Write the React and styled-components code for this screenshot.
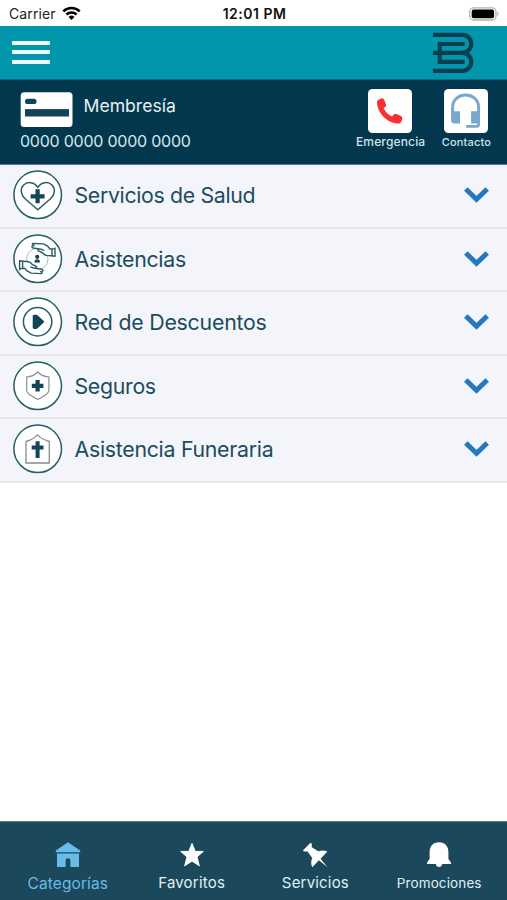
import React from 'react';
import styled, { createGlobalStyle } from 'styled-components';

const GlobalStyle = createGlobalStyle`
    * {
        box-sizing: border-box;
    }
    body {
        margin: 0;
        background: #fff;
        font-family: Inter, "Liberation Sans", sans-serif;
    }
`;

const Screen = styled.div`
    width: 100%;
    height: 100vh;
    display: flex;
    flex-direction: column;
    overflow: hidden;
`;

const StatusBar = styled.div`
    height: 25.5px;
    flex: none;
    display: grid;
    grid-template-columns: 1fr auto 1fr;
    align-items: center;
    padding: 1.5px 7px 0 9px;
    color: #222;
    font-size: 14px;
`;

const Carrier = styled.div`
    display: flex;
    align-items: center;
    gap: 6px;
    letter-spacing: 0.1px;
`;

const Time = styled.div`
    font-weight: 600;
    letter-spacing: 0.5px;
    color: #111;
`;

const Battery = styled.svg`
    justify-self: end;
`;

const Header = styled.header`
    height: 54px;
    flex: none;
    display: flex;
    justify-content: space-between;
    padding: 0 32px 0 12px;
    background: #0296ad;
    border-bottom: 1px solid #036f86;
`;

const MenuButton = styled.button`
    width: 38px;
    height: 38px;
    margin-top: 15px;
    padding: 0;
    border: 0;
    background: none;
    display: flex;
    flex-direction: column;
    gap: 5.6px;
`;

const MenuLine = styled.span`
    width: 100%;
    height: 4px;
    border-radius: 1px;
    background: #effcfe;
`;

const Logo = styled.svg`
    margin-top: 6.5px;
`;

const Membership = styled.section`
    height: 85.5px;
    flex: none;
    display: flex;
    justify-content: space-between;
    padding: 0 16px 0 20px;
    background: #02374d;
    border-bottom: 1px solid #547796;
`;

const CardTop = styled.div`
    display: flex;
    padding-top: 12.5px;
    height: 49px;
`;

const CardTitle = styled.div`
    margin: 2px 0 0 10.5px;
    font-size: 17.6px;
    line-height: 24px;
    letter-spacing: ${props => props.$spacing}px;
    color: #e6f1f5;
`;

const CardNumber = styled.div`
    font-size: 16px;
    line-height: 24px;
    letter-spacing: ${props => props.$spacing}px;
    color: #d5e7ee;
`;

const Actions = styled.div`
    display: flex;
    gap: 16.5px;
    padding-top: 9.5px;
`;

const Action = styled.div`
    display: flex;
    flex-direction: column;
    align-items: center;
    font-size: ${props => props.$size}px;
    font-weight: 500;
    letter-spacing: ${props => props.$spacing}px;
    line-height: 14px;
    color: #d0e2e9;
`;

const ActionIcon = styled.div`
    width: 43.5px;
    height: 43.5px;
    margin: 0 1px 2px 0;
    border-radius: 4.5px;
    background: #fff;
`;

const Row = styled.div`
    height: 63.5px;
    flex: none;
    display: flex;
    align-items: center;
    padding: 0 17.5px 1.5px 12.5px;
    background: #f3f5fa;
    border-bottom: 2.5px solid #e6e7e9;
`;

const RowLabel = styled.div`
    flex: 1;
    margin: 0 0 0 12px;
    font-size: 21.3px;
    line-height: 28px;
    letter-spacing: ${props => props.$spacing}px;
    white-space: nowrap;
    color: #1c4c60;
`;

const Spacer = styled.main`
    flex: 1;
`;

const TabBar = styled.nav`
    height: 79.5px;
    flex: none;
    display: grid;
    grid-template-columns: repeat(4, 123.8px);
    justify-content: center;
    background: #1b495b;
    border-top: 1px solid #58808c;
`;

const Tab = styled.div`
    display: flex;
    flex-direction: column;
    align-items: center;
    padding-top: 20px;
    color: ${props => props.$active ? '#67bce9' : '#e2eff3'};
`;

const TabLabel = styled.div`
    margin-top: ${props => props.$top}px;
    font-size: ${props => props.$size}px;
    line-height: 20px;
    letter-spacing: ${props => props.$spacing}px;
`;

const WifiIcon = () => (
    <svg width="19" height="15" viewBox="0 0 19 15" fill="none" stroke="#000" strokeWidth="2.5">
        <path d="M1.3 5.4 A11.8 11.8 0 0 1 17.7 5.4" />
        <path d="M4.4 8.5 A7.3 7.3 0 0 1 14.6 8.5" />
        <path d="M9.5 14 L6.6 11 A4.2 4.2 0 0 1 12.4 11 Z" fill="#000" stroke="none" />
    </svg>
);

const LogoIcon = () => (
    <Logo width="42" height="42" viewBox="0 0 42 42" fill="none" stroke="#073f50" strokeWidth="4.2">
        <path d="M0 2.8 H29.3 A9 9 0 0 1 29.3 20.8 H0" />
        <path d="M29.3 20.8 A9 9 0 0 1 29.3 38.8 H0" />
        <path d="M31.7 12 H6.8 V29.8 H31.7" />
    </Logo>
);

const CardIcon = () => (
    <svg width="53" height="36" viewBox="0 0 53 36">
        <rect x=".7" y=".2" width="51.8" height="34.8" rx="3.5" fill="#fff" />
        <rect x="5" y="6.8" width="11.5" height="5.2" rx="2.6" fill="#12435a" />
        <rect x="5" y="17.1" width="44" height="7.4" fill="#12435a" />
    </svg>
);

const PhoneIcon = () => (
    <svg width="43.5" height="43.5" viewBox="0 0 43.5 43.5">
        <path
            fill="#f92f36"
            d="M11 10.4 L13.5 9.3 Q15.6 8.9 16.3 11 L18 15.4 Q18.5 17 17 18.1 L15.6 19.3 C17.4 23 20.2 25.9 24.1 27.6 L25.9 25.5 Q26.9 24.4 28.5 25.1 L32.9 27 Q34.8 28 34.3 29.9 L33.2 32.9 Q32.5 34.6 30.5 34.6 C19.4 34.3 9.3 24.2 9 13 Q9.1 11.1 11 10.4 Z"
        />
    </svg>
);

const HeadsetIcon = () => (
    <svg width="43.5" height="43.5" viewBox="0 0 43.5 43.5" fill="none" stroke="#79a7d0">
        <path d="M8.6 24 V18.5 C8.6 1.8 34.6 1.8 34.6 18.5 V24" strokeWidth="3" />
        <path d="M7.1 22.3 H16 V34.6 H10.5 Q7.1 34.6 7.1 31 Z M27.1 22.3 H36 V31 Q36 34.6 32.5 34.6 H27.1 Z" fill="#79a7d0" stroke="none" />
        <path d="M34.5 31 V36 Q34.5 37.3 33 37.3 H22.2" strokeWidth="2.8" />
    </svg>
);

const Chevron = () => (
    <svg width="27" height="18" viewBox="0 0 27 18" fill="none" stroke="#2478bd" strokeWidth="5">
        <path d="M2.8 3 L13.5 13.3 L24.2 3" />
    </svg>
);

// every category drawing sits in the same 49px ring
const RingIcon = ({ children }) => (
    <svg width="50" height="50" viewBox="0 0 50 50" fill="none" stroke="#285f66">
        <circle cx="24.7" cy="24.8" r="23.8" fill="#fff" strokeWidth="1.5" />
        {children}
    </svg>
);

const Cross = ({ x, y, size }) => (
    <path d={`M${x - size} ${y} H${x + size} M${x} ${y - size} V${y + size}`} stroke="#124657" strokeWidth="4.2" />
);

const HealthIcon = () => (
    <RingIcon>
        <path d="M24.8 39.7 L12.1 28.8 C7.7 25 7 18.8 10.4 15.2 C14.5 11 21.2 12 24.8 17.3 C28.4 12 35.1 11 39.2 15.2 C42.6 18.8 41.9 25 37.5 28.8 Z" strokeWidth="1.5" />
        <Cross x={24.6} y={26.3} size={7} />
    </RingIcon>
);

const HandsIcon = () => (
    <RingIcon>
        <circle cx="24.3" cy="25" r="10.7" stroke="#a3b7bc" strokeWidth=".9" />
        <circle cx="24.2" cy="22.8" r="2.1" fill="#124657" stroke="none" />
        <path d="M21.4 28.6 Q21.5 25.3 24.2 25.3 Q26.9 25.3 27 28.6 Z" fill="#124657" stroke="none" />
        <path d="M42 13.5 V22.2 L33.6 21.4 Q31.2 21 29 18.5 L25.9 17.2 Q23.8 15.6 26.4 14.9 L31.2 16.4 M29.3 15.5 L20.2 14 Q17.6 12.9 19.8 11.8 L21.1 11.6 Q17.8 9.7 20.5 9.5 L30.4 9.9 L34.7 12.2 L37 15 L42 14.6 M39 15 V21.8" fill="#fff" strokeWidth="1.4" strokeLinejoin="round" />
        <path d="M6.6 36.4 V26.8 L15.2 27.8 Q17.5 28.2 19.5 30.7 L22.8 32 Q24.9 33.7 22.2 34.4 L17.5 33 M19.5 33.8 L28.6 35.2 Q31.2 36.4 29 37.5 L27.7 37.7 Q30.5 39.4 27.8 39.6 L18.2 39.1 L14 36.8 L11.6 34.3 L6.6 34.6 M9.6 27.2 V34.4" fill="#fff" strokeWidth="1.4" strokeLinejoin="round" />
    </RingIcon>
);

const PlayIcon = () => (
    <RingIcon>
        <circle cx="24.6" cy="24.8" r="14.2" strokeWidth="1.5" />
        <path d="M21.1 19.1 H23.3 L29.6 24.8 L23.3 30.5 H21.1 Z" fill="#124657" stroke="#124657" strokeWidth="2.8" strokeLinejoin="round" />
    </RingIcon>
);

const ShieldIcon = () => (
    <RingIcon>
        <path d="M24.8 11 C28.2 14.4 31.7 15.7 35.9 16 V29.2 C35.9 33.8 29 35.4 24.8 38.5 C20.6 35.4 13.7 33.8 13.7 29.2 V16 C17.9 15.7 21.4 14.4 24.8 11 Z" stroke="#84938f" strokeWidth="1.2" />
        <Cross x={24.6} y={24.8} size={5.8} />
    </RingIcon>
);

const FuneralIcon = () => (
    <RingIcon>
        <path d="M13 39 V17.5 Q20.2 15.6 24.4 10.9 Q29 15.6 36.3 17.5 V39 Z" stroke="#8a898f" strokeWidth="1.3" strokeLinejoin="round" />
        <path d="M24.6 17.2 V34 M18.7 23.6 H30.5" stroke="#124657" strokeWidth="4" />
    </RingIcon>
);

const HomeIcon = () => (
    <svg width="26" height="26" viewBox="0 0 26 26" fill="currentColor">
        <path d="M13 .2 L25.2 8.4 V10.3 H.8 V8.4 Z M2 11.4 H24 V25 H15.4 V18.3 Q15.4 16.2 13 16.2 Q10.6 16.2 10.6 18.3 V25 H2 Z" />
    </svg>
);

const StarIcon = () => (
    <svg width="26" height="26" viewBox="0 0 26 26">
        <path fill="#fff" stroke="#fff" strokeLinejoin="round" d="M13 1.4 L16.2 9.4 H24.3 L18 14.9 L20.3 23.8 L13 19.1 L5.7 23.8 L8 14.9 L1.7 9.4 H9.8 Z" />
    </svg>
);

const PinIcon = () => (
    <svg width="26" height="26" viewBox="0 0 26 26">
        <path fill="#fff" d="M8.5 .8 Q10.8 2.2 9.5 5 L16.2 9.3 Q21.2 7.4 25.4 9.6 L18.5 16.7 L25.3 25 L16.8 18.3 L10.4 25.2 Q8 21 10.2 16 L5.4 9.2 Q2.5 10.3 .9 8.4 Z" />
    </svg>
);

const BellIcon = () => (
    <svg width="26" height="26" viewBox="0 0 26 26">
        <path fill="#fff" d="M13 .2 C19 .2 22.4 4.2 22.4 10 V17 L24.8 20.2 Q25.8 22 23.8 22.1 H16.2 Q15.7 25.1 13 25.1 Q10.3 25.1 9.8 22.1 H2.2 Q.2 22 1.2 20.2 L3.6 17 V10 C3.6 4.2 7 .2 13 .2 Z" />
    </svg>
);

const categories = [
    { label: 'Servicios de Salud', icon: HealthIcon, spacing: -0.33 },
    { label: 'Asistencias', icon: HandsIcon, spacing: -0.3 },
    { label: 'Red de Descuentos', icon: PlayIcon, spacing: -0.22 },
    { label: 'Seguros', icon: ShieldIcon, spacing: -0.3 },
    { label: 'Asistencia Funeraria', icon: FuneralIcon, spacing: -0.27 },
];

const tabs = [
    { label: 'Categorías', icon: HomeIcon, size: 15.5, spacing: 0.1, top: 6, active: true },
    { label: 'Favoritos', icon: StarIcon, size: 15, spacing: 0.2, top: 5 },
    { label: 'Servicios', icon: PinIcon, size: 15, spacing: 0.18, top: 5 },
    { label: 'Promociones', icon: BellIcon, size: 13.5, spacing: 0.12, top: 5 },
];

const App = () => {
    return (
        <Screen>
            <GlobalStyle />
            <StatusBar>
                <Carrier>
                    Carrier
                    <WifiIcon />
                </Carrier>
                <Time>12:01 PM</Time>
                <Battery width="31" height="14" viewBox="0 0 31 14">
                    <rect x=".8" y=".8" width="26.2" height="12.2" rx="3.8" fill="#fff" stroke="#b2b2b2" strokeWidth="1.3" />
                    <rect x="2.7" y="2.6" width="22.4" height="8.6" rx="2" fill="#000" />
                    <path d="M28.4 4.6 Q31 6.9 28.4 9.2 Z" fill="#b2b2b2" />
                </Battery>
            </StatusBar>
            <Header>
                <MenuButton aria-label="Menú">
                    <MenuLine />
                    <MenuLine />
                    <MenuLine />
                </MenuButton>
                <LogoIcon />
            </Header>
            <Membership>
                <div>
                    <CardTop>
                        <CardIcon />
                        <CardTitle $spacing={0}>Membresía</CardTitle>
                    </CardTop>
                    <CardNumber $spacing={-0.23}>0000 0000 0000 0000</CardNumber>
                </div>
                <Actions>
                    <Action $size={12} $spacing={0.15}>
                        <ActionIcon><PhoneIcon /></ActionIcon>
                        Emergencia
                    </Action>
                    <Action $size={11} $spacing={0.15}>
                        <ActionIcon><HeadsetIcon /></ActionIcon>
                        Contacto
                    </Action>
                </Actions>
            </Membership>
            {categories.map(({ label, icon: Icon, spacing }) => (
                <Row key={label}>
                    <Icon />
                    <RowLabel $spacing={spacing}>{label}</RowLabel>
                    <Chevron />
                </Row>
            ))}
            <Spacer />
            <TabBar>
                {tabs.map(({ label, icon: Icon, size, spacing, top, active }) => (
                    <Tab key={label} $active={active}>
                        <Icon />
                        <TabLabel $size={size} $spacing={spacing} $top={top}>{label}</TabLabel>
                    </Tab>
                ))}
            </TabBar>
        </Screen>
    );
};

export default App;
